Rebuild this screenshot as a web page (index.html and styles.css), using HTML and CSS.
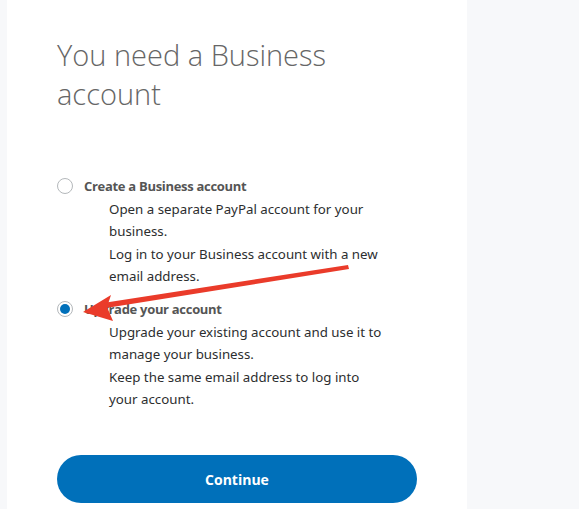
FILE: index.html
```html
<!DOCTYPE html>
<html>
<head>
<meta charset="utf-8">
<link rel="stylesheet" href="styles.css">
</head>
<body>
<div class="page">
  <main class="panel">
    <h1 class="title">You need a Business account</h1>
    <div class="options">
      <div class="option">
        <div class="option-head">
          <span class="radio"></span>
          <span class="label">Create a Business account</span>
        </div>
        <div class="desc">
          <p>Open a separate PayPal account for your business.</p>
          <p>Log in to your Business account with a new email address.</p>
        </div>
      </div>
      <div class="option">
        <div class="option-head">
          <span class="radio checked"></span>
          <span class="label">Upgrade your account</span>
        </div>
        <div class="desc">
          <p>Upgrade your existing account and use it to manage your business.</p>
          <p>Keep the same email address to log into your account.</p>
        </div>
      </div>
    </div>
    <button class="continue">Continue</button>
    <svg class="arrow" width="579" height="509" viewBox="0 0 579 509">
      <polygon points="348,265 349,269 106,308 103,303" fill="#ea3b2a"/>
      <polygon points="83,312 111,295 107,307 113,321" fill="#ea3b2a"/>
    </svg>
  </main>
  <aside class="side"></aside>
</div>
</body>
</html>
```
FILE: styles.css
```css
html, body {
  margin: 0;
  padding: 0;
  background: #f7f8fa;
  height: 100%;
}
.page {
  display: flex;
  height: 509px;
  padding-left: 7px;
}
.panel {
  width: 410px;
  background: #ffffff;
  padding: 0 0 0 50px;
  flex: none;
}
.side {
  flex: 1;
}
.title {
  font-family: "Open Sans", sans-serif;
  font-weight: 300;
  font-size: 29px;
  line-height: 39px;
  color: #666666;
  margin: 35px 0 0 0;
  width: 290px;
}
.options {
  margin-top: 64px;
  display: flex;
  flex-direction: column;
  gap: 13px;
}
.option-head {
  display: flex;
  align-items: center;
  gap: 11px;
  height: 18px;
}
.radio {
  width: 14px;
  height: 14px;
  border: 1px solid #b4b8bb;
  border-radius: 50%;
  background: #fff;
  display: flex;
  align-items: center;
  justify-content: center;
  flex: none;
}
.radio.checked::after {
  content: "";
  width: 10px;
  height: 10px;
  border-radius: 50%;
  background: #0070ba;
}
.label {
  font-family: "Open Sans", sans-serif;
  font-weight: 700;
  font-size: 13px;
  letter-spacing: -0.3px;
  color: #555555;
}
.desc {
  padding-left: 52px;
  margin-top: 3px;
  width: 276px;
  font-family: "Noto Sans", sans-serif;
  font-size: 13.3px;
  line-height: 22.3px;
  color: #2c2e2f;
}
.desc p {
  margin: 0;
}
.continue {
  display: block;
  margin-top: 45px;
  width: 360px;
  height: 48px;
  border: none;
  border-radius: 24px;
  background: #0070ba;
  color: #ffffff;
  font-family: "Open Sans", sans-serif;
  font-weight: 700;
  font-size: 14px;
}
.arrow {
  position: absolute;
  left: 0;
  top: 0;
  pointer-events: none;
}
```
